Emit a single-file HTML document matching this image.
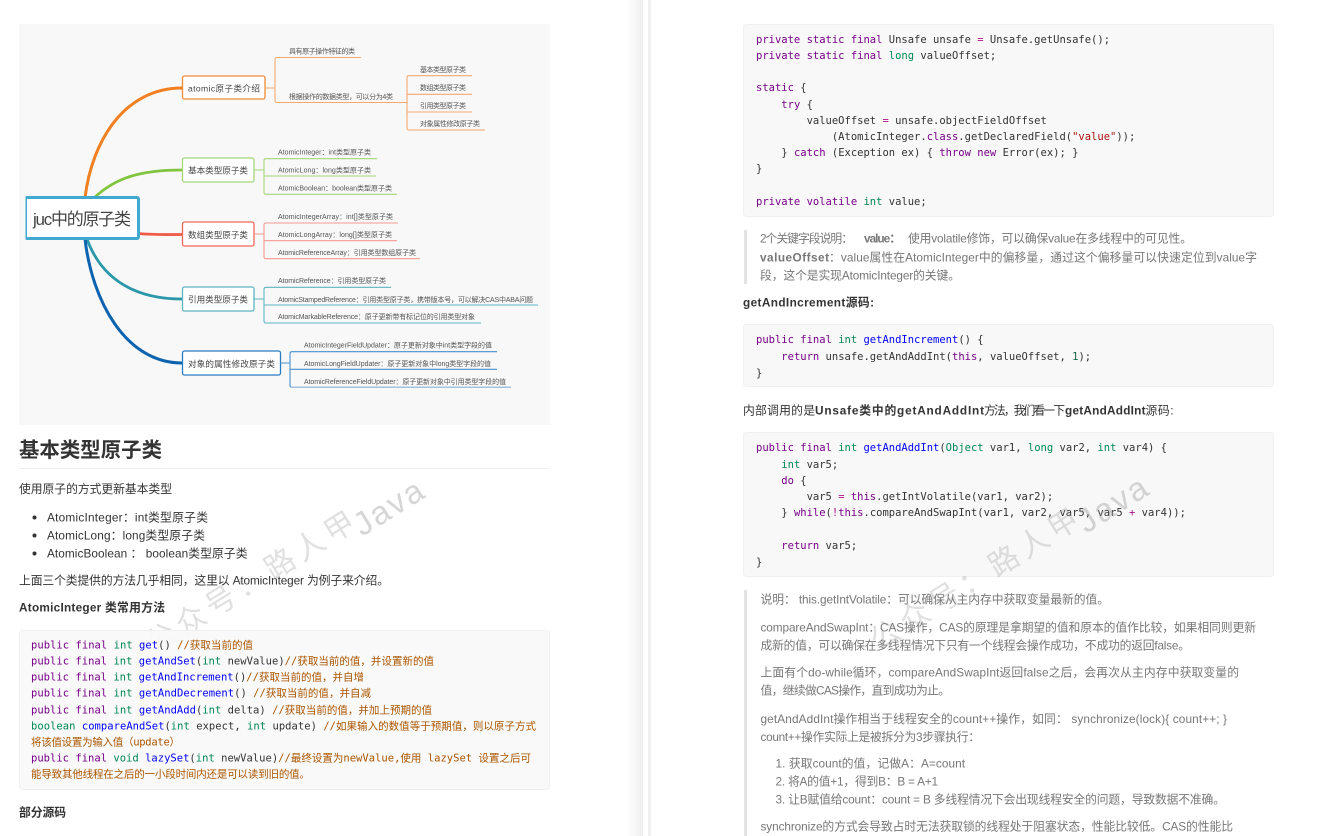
<!DOCTYPE html>
<html lang="zh">
<head>
<meta charset="utf-8">
<title>基本类型原子类</title>
<style>
html,body{margin:0;padding:0;background:#fff;width:1335px;height:836px;overflow:hidden}
svg{display:block}
text{font-family:"Liberation Sans","Noto Sans CJK SC",sans-serif;white-space:pre}
.t{font-size:11.8px;fill:#333}
.q{font-size:11.8px;fill:#777}
.b{font-weight:bold}
.c text,text.c{font-family:"DejaVu Sans Mono","Noto Sans CJK SC",monospace;font-size:10.5px;fill:#333}
.k{fill:#770088}.y{fill:#008855}.d{fill:#0000ff}.m{fill:#aa5500}.s{fill:#aa1111}.n{fill:#116644}.o{fill:#998811}.o2{fill:#aa1188}
.mm text{font-size:7px;fill:#555}
.mm .bx{font-size:8.6px;fill:#444}
.box{fill:#f8f8f8;stroke:#f0f0f0;stroke-width:1}
.ln{fill:none;stroke-width:1.1}
.wc{font-size:30px;letter-spacing:5px;fill:#999;fill-opacity:.3}
.wj{font-size:33px;fill:#999;fill-opacity:.4}
</style>
</head>
<body>
<svg width="1335" height="836" viewBox="0 0 1335 836" xmlns="http://www.w3.org/2000/svg">
<defs>
<linearGradient id="sh" x1="0" x2="1" y1="0" y2="0"><stop offset="0" stop-color="#fff"/><stop offset="1" stop-color="#eeeeee"/></linearGradient>
<filter id="bl" x="0" y="0" width="100%" height="100%"><feGaussianBlur stdDeviation="0.35"/></filter>
</defs>
<rect width="1335" height="836" fill="#fff"/>
<rect x="627" y="0" width="16" height="836" fill="url(#sh)"/>
<rect x="648" y="0" width="3" height="836" fill="#f0f0f0"/>

<!-- mind map -->
<rect x="19" y="24" width="531" height="401" fill="#f8f8f8"/>
<g class="mm" filter="url(#bl)">
<path d="M85 198 C92 140 125 88 182 88" fill="none" stroke="#f08020" stroke-width="3"/>
<path d="M94 198 C115 178 140 170 182 170" fill="none" stroke="#80c440" stroke-width="2.8"/>
<path d="M138 233.5 C155 235 165 234.5 182 234.5" fill="none" stroke="#f05a4a" stroke-width="2.8"/>
<path d="M87 239 C100 275 130 299 182 299" fill="none" stroke="#2a98aa" stroke-width="2.8"/>
<path d="M85 239 C92 300 125 363 182 363" fill="none" stroke="#0f64b0" stroke-width="3"/>

<rect x="25.5" y="197.5" width="113" height="41" rx="1.5" fill="#fff" stroke="#3fa9d0" stroke-width="3"/>
<text x="33" y="225" style="font-size:17px;fill:#444" textLength="98">juc中的原子类</text>

<g fill="#fff" stroke-width="1.3">
<rect x="182.5" y="76" width="82.5" height="23" rx="2" stroke="#f08a35"/>
<rect x="182.5" y="158" width="71.5" height="24" rx="2" stroke="#a5d67a"/>
<rect x="182.5" y="222" width="71.5" height="24" rx="2" stroke="#f0685a"/>
<rect x="182.5" y="287" width="71.5" height="24" rx="2" stroke="#5db5c2"/>
<rect x="182.5" y="351" width="98" height="24" rx="2" stroke="#2a7cc0"/>
</g>
<text class="bx" x="188" y="91.5" textLength="72">atomic原子类介绍</text>
<text class="bx" x="188" y="173.5" textLength="60">基本类型原子类</text>
<text class="bx" x="188" y="238" textLength="60">数组类型原子类</text>
<text class="bx" x="188" y="302.5" textLength="60">引用类型原子类</text>
<text class="bx" x="188" y="367" textLength="87">对象的属性修改原子类</text>

<g class="ln" stroke="#f5a870">
<path d="M265 88 H275 M361 57.5 H277 Q275 57.5 275 59.5 V100.5 Q275 102.5 277 102.5 H407 M472 75.7 H409 Q407 75.7 407 77.7 V128 Q407 130 409 130 H485 M407 94.3 H472 M407 112 H472"/>
</g>
<text x="289" y="53.5" textLength="66">具有原子操作特征的类</text>
<text x="289" y="99" textLength="104">根据操作的数据类型，可以分为4类</text>
<text x="420" y="72" textLength="46">基本类型原子类</text>
<text x="420" y="90" textLength="46">数组类型原子类</text>
<text x="420" y="108" textLength="46">引用类型原子类</text>
<text x="420" y="126" textLength="60">对象属性修改原子类</text>

<g class="ln" stroke="#a5d67a">
<path d="M254 170 H264 M377 158.7 H266 Q264 158.7 264 160.7 V192.3 Q264 194.3 266 194.3 H397 M264 176 H376"/>
</g>
<text x="278" y="154.5" textLength="93">AtomicInteger：int类型原子类</text>
<text x="278" y="172.5" textLength="93">AtomicLong：long类型原子类</text>
<text x="278" y="190.5" textLength="114">AtomicBoolean：boolean类型原子类</text>

<g class="ln" stroke="#f59a90">
<path d="M254 234 H264 M398 223 H266 Q264 223 264 225 V256.7 Q264 258.7 266 258.7 H420 M264 240.7 H397"/>
</g>
<text x="278" y="219.2" textLength="115">AtomicIntegerArray：int[]类型原子类</text>
<text x="278" y="237.2" textLength="114">AtomicLongArray：long[]类型原子类</text>
<text x="278" y="255.2" textLength="138">AtomicReferenceArray：引用类型数组原子类</text>

<g class="ln" stroke="#5db5c2">
<path d="M254 299 H264 M391 287.3 H266 Q264 287.3 264 289.3 V321 Q264 323 266 323 H481 M264 305 H538"/>
</g>
<text x="278" y="283.2" textLength="108">AtomicReference：引用类型原子类</text>
<text x="278" y="301.8" textLength="255">AtomicStampedReference：引用类型原子类，携带版本号，可以解决CAS中ABA问题</text>
<text x="278" y="319.2" textLength="197">AtomicMarkableReference：原子更新带有标记位的引用类型对象</text>

<g class="ln" stroke="#4a90cc">
<path d="M280 363 H290 M497 351.7 H292 Q290 351.7 290 353.7 V385.3 Q290 387.3 292 387.3 H511 M290 369.3 H497"/>
</g>
<text x="304" y="347.5" textLength="188">AtomicIntegerFieldUpdater：原子更新对象中int类型字段的值</text>
<text x="304" y="365.8" textLength="187">AtomicLongFieldUpdater：原子更新对象中long类型字段的值</text>
<text x="304" y="383.8" textLength="202">AtomicReferenceFieldUpdater：原子更新对象中引用类型字段的值</text>
</g>

<!-- left content -->
<text x="19" y="457" style="font-size:20.4px;font-weight:bold;fill:#333" textLength="143">基本类型原子类</text>
<rect x="19" y="468" width="531" height="1" fill="#eee"/>
<text class="t" x="19" y="493" textLength="153">使用原子的方式更新基本类型</text>
<circle cx="34.5" cy="517.5" r="2" fill="#333"/>
<circle cx="34.5" cy="535.5" r="2" fill="#333"/>
<circle cx="34.5" cy="553.5" r="2" fill="#333"/>
<text class="t" x="47" y="521.5" textLength="161">AtomicInteger：int类型原子类</text>
<text class="t" x="47" y="539.5" textLength="158">AtomicLong：long类型原子类</text>
<text class="t" x="47" y="557.5" textLength="200.5">AtomicBoolean ： boolean类型原子类</text>
<text class="t" x="19" y="584.7" textLength="370">上面三个类提供的方法几乎相同，这里以 AtomicInteger 为例子来介绍。</text>
<text class="t b" x="19" y="611.7" textLength="146">AtomicInteger 类常用方法</text>

<!-- left watermark sits beneath the code box -->
<text class="wc" transform="translate(154 655) rotate(-32)">公众号：路人甲</text>
<text class="wj" transform="translate(362 537) rotate(-32)" textLength="76">Java</text>

<rect class="box" x="19.5" y="630.5" width="530" height="159" rx="3" fill-opacity=".92" style="fill-opacity:.92"/>
<g class="c">
<text x="31" y="648.7" textLength="222"><tspan class="k">public final</tspan> <tspan class="y">int</tspan> <tspan class="d">get</tspan>() <tspan class="m">//获取当前的值</tspan></text>
<text x="31" y="664.7" textLength="403"><tspan class="k">public final</tspan> <tspan class="y">int</tspan> <tspan class="d">getAndSet</tspan>(<tspan class="y">int</tspan> newValue)<tspan class="m">//获取当前的值，并设置新的值</tspan></text>
<text x="31" y="680.7" textLength="333"><tspan class="k">public final</tspan> <tspan class="y">int</tspan> <tspan class="d">getAndIncrement</tspan>()<tspan class="m">//获取当前的值，并自增</tspan></text>
<text x="31" y="696.7" textLength="340"><tspan class="k">public final</tspan> <tspan class="y">int</tspan> <tspan class="d">getAndDecrement</tspan>() <tspan class="m">//获取当前的值，并自减</tspan></text>
<text x="31" y="713.7" textLength="401"><tspan class="k">public final</tspan> <tspan class="y">int</tspan> <tspan class="d">getAndAdd</tspan>(<tspan class="y">int</tspan> delta) <tspan class="m">//获取当前的值，并加上预期的值</tspan></text>
<text x="31" y="729.7" textLength="505"><tspan class="y">boolean</tspan> <tspan class="d">compareAndSet</tspan>(<tspan class="y">int</tspan> expect, <tspan class="y">int</tspan> update) <tspan class="m">//如果输入的数值等于预期值，则以原子方式</tspan></text>
<text x="31" y="745.7" textLength="149"><tspan class="m">将该值设置为输入值（update）</tspan></text>
<text x="31" y="761.7" textLength="500"><tspan class="k">public final</tspan> <tspan class="y">void</tspan> <tspan class="d">lazySet</tspan>(<tspan class="y">int</tspan> newValue)<tspan class="m">//最终设置为newValue,使用 lazySet 设置之后可</tspan></text>
<text x="31" y="777.7" textLength="279"><tspan class="m">能导致其他线程在之后的一小段时间内还是可以读到旧的值。</tspan></text>
</g>
<text class="t b" x="19" y="816.7" textLength="47">部分源码</text>

<!-- right content -->
<rect class="box" x="743.5" y="24.5" width="530" height="192" rx="3"/>
<g class="c">
<text x="756" y="43"><tspan class="k">private static final</tspan> Unsafe unsafe <tspan class="o2">=</tspan> Unsafe.getUnsafe();</text>
<text x="756" y="59"><tspan class="k">private static final</tspan> <tspan class="y">long</tspan> valueOffset;</text>
<text x="756" y="91"><tspan class="k">static</tspan> {</text>
<text x="756" y="108">    <tspan class="k">try</tspan> {</text>
<text x="756" y="124">        valueOffset <tspan class="o2">=</tspan> unsafe.objectFieldOffset</text>
<text x="756" y="140">            (AtomicInteger.<tspan class="k">class</tspan>.getDeclaredField(<tspan class="s">"value"</tspan>));</text>
<text x="756" y="156">    } <tspan class="k">catch</tspan> (Exception ex) { <tspan class="k">throw new</tspan> Error(ex); }</text>
<text x="756" y="172">}</text>
<text x="756" y="205"><tspan class="k">private volatile</tspan> <tspan class="y">int</tspan> value;</text>
</g>

<rect x="744" y="230" width="3" height="54" fill="#e3e3e3"/>
<text class="q" x="760" y="242.7" textLength="93">2个关键字段说明：</text>
<text class="q b" x="864" y="242.7" textLength="37">value：</text>
<text class="q" x="908" y="242.7" textLength="284">使用volatile修饰，可以确保value在多线程中的可见性。</text>
<text class="q b" x="760" y="261.7" textLength="69">valueOffset</text>
<text class="q" x="829" y="261.7" textLength="428">：value属性在AtomicInteger中的偏移量，通过这个偏移量可以快速定位到value字</text>
<text class="q" x="760" y="279.7" textLength="200">段，这个是实现AtomicInteger的关键。</text>

<text class="t b" x="743" y="306.7" textLength="131">getAndIncrement源码:</text>

<rect class="box" x="743.5" y="324.5" width="530" height="62" rx="3"/>
<g class="c">
<text x="756" y="343"><tspan class="k">public final</tspan> <tspan class="y">int</tspan> <tspan class="d">getAndIncrement</tspan>() {</text>
<text x="756" y="360">    <tspan class="k">return</tspan> unsafe.getAndAddInt(<tspan class="k">this</tspan>, valueOffset, <tspan class="n">1</tspan>);</text>
<text x="756" y="376.5">}</text>
</g>

<text class="t" x="743" y="414.7" textLength="72">内部调用的是</text>
<text class="t b" x="815" y="414.7" textLength="169">Unsafe类中的getAndAddInt</text>
<text class="t" x="984" y="414.7" textLength="81">方法，我们看一下</text>
<text class="t b" x="1065" y="414.7" textLength="80.5">getAndAddInt</text>
<text class="t" x="1145.5" y="414.7" textLength="28">源码:</text>

<rect class="box" x="743.5" y="432.5" width="530" height="144" rx="3"/>
<g class="c">
<text x="756" y="451"><tspan class="k">public final</tspan> <tspan class="y">int</tspan> <tspan class="d">getAndAddInt</tspan>(<tspan class="y">Object</tspan> var1, <tspan class="y">long</tspan> var2, <tspan class="y">int</tspan> var4) {</text>
<text x="756" y="468">    <tspan class="y">int</tspan> var5;</text>
<text x="756" y="484">    <tspan class="k">do</tspan> {</text>
<text x="756" y="500">        var5 <tspan class="o2">=</tspan> <tspan class="k">this</tspan>.getIntVolatile(var1, var2);</text>
<text x="756" y="516">    } <tspan class="k">while</tspan>(<tspan class="o2">!</tspan><tspan class="k">this</tspan>.compareAndSwapInt(var1, var2, var5, var5 <tspan class="o2">+</tspan> var4));</text>
<text x="756" y="549">    <tspan class="k">return</tspan> var5;</text>
<text x="756" y="565.5">}</text>
</g>

<rect x="744" y="590" width="3" height="246" fill="#e3e3e3"/>
<text class="q" x="760.5" y="603.7" textLength="348.5">说明： this.getIntVolatile：可以确保从主内存中获取变量最新的值。</text>
<text class="q" x="760.5" y="631.7" textLength="495.5">compareAndSwapInt：CAS操作，CAS的原理是拿期望的值和原本的值作比较，如果相同则更新</text>
<text class="q" x="760.5" y="649.7" textLength="429.5">成新的值，可以确保在多线程情况下只有一个线程会操作成功，不成功的返回false。</text>
<text class="q" x="760.5" y="676.7" textLength="478.5">上面有个do-while循环，compareAndSwapInt返回false之后，会再次从主内存中获取变量的</text>
<text class="q" x="760.5" y="694.7" textLength="189.5">值，继续做CAS操作，直到成功为止。</text>
<text class="q" x="760.5" y="723" textLength="466.5">getAndAddInt操作相当于线程安全的count++操作，如同： synchronize(lock){ count++; }</text>
<text class="q" x="760.5" y="741" textLength="219.5">count++操作实际上是被拆分为3步骤执行：</text>
<text class="q" x="775.5" y="767.7" textLength="189.5">1. 获取count的值，记做A：A=count</text>
<text class="q" x="775.5" y="785.7" textLength="162.5">2. 将A的值+1，得到B：B = A+1</text>
<text class="q" x="775.5" y="803.7" textLength="449.5">3. 让B赋值给count：count = B 多线程情况下会出现线程安全的问题，导致数据不准确。</text>
<text class="q" x="760.5" y="830.7" textLength="472.5">synchronize的方式会导致占时无法获取锁的线程处于阻塞状态，性能比较低。CAS的性能比</text>

<!-- right watermark -->
<text class="wc" transform="translate(878 652) rotate(-32)">公众号：路人甲</text>
<text class="wj" transform="translate(1086 534) rotate(-32)" textLength="76">Java</text>
</svg>
</body>
</html>
